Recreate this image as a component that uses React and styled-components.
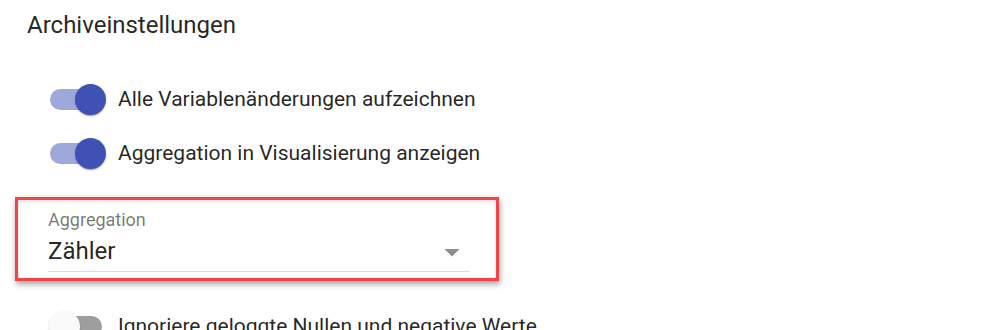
import React from 'react';
import styled, { createGlobalStyle } from 'styled-components';

const GlobalStyle = createGlobalStyle`
  html, body {
    margin: 0;
    padding: 0;
    background: #fff;
    font-family: Roboto, "Liberation Sans", sans-serif;
    color: rgba(0,0,0,.87);
    overflow: hidden;
  }
`;

const Page = styled.div`
  width: 989px;
  height: 330px;
  padding: 9px 0 0 27px;
  box-sizing: border-box;
`;

const Heading = styled.h2`
  margin: 0;
  font-size: 24px;
  line-height: 32px;
  font-weight: 400;
`;

const Options = styled.div`
  display: flex;
  flex-direction: column;
  margin-top: 31px;
  margin-left: 5px;
`;

const SwitchRow = styled.label`
  display: flex;
  align-items: center;
  height: 54px;
  font-size: 21px;
  line-height: 28px;
`;

const SwitchRoot = styled.span`
  position: relative;
  display: inline-flex;
  align-items: center;
  width: 86px;
  height: 54px;
  flex-shrink: 0;
`;

const Track = styled.span`
  position: absolute;
  left: 18px;
  top: 16.5px;
  width: 52px;
  height: 21px;
  border-radius: 10.5px;
  background: ${p => (p.checked ? '#9fa8da' : '#9e9e9e')};
`;

const Thumb = styled.span`
  position: absolute;
  top: 12px;
  left: ${p => (p.checked ? '42.5px' : '17px')};
  width: 31px;
  height: 31px;
  border-radius: 50%;
  background: ${p => (p.checked ? '#3f51b5' : '#fafafa')};
  box-shadow: 0 2px 1px -1px rgba(0,0,0,.2), 0 1px 1px 0 rgba(0,0,0,.14), 0 1px 3px 0 rgba(0,0,0,.12);
`;

const Highlight = styled.div`
  align-self: flex-start;
  margin: 17px 0 18px -17px;
  width: 484px;
  box-sizing: border-box;
  border: 3px solid #f44347;
  padding: 10px 26px 6px 30px;
  box-shadow: 1px 3px 6px rgba(0,0,0,.38), inset 0 2px 4px rgba(0,0,0,.12);
`;

const Field = styled.div`
  display: flex;
  flex-direction: column;
`;

const FieldLabel = styled.span`
  font-size: 18px;
  line-height: 20px;
  color: rgba(0,0,0,.54);
`;

const SelectLine = styled.div`
  display: flex;
  align-items: center;
  justify-content: space-between;
  margin-top: 5px;
  height: 32px;
  border-bottom: 1px solid #dedede;
  padding-bottom: 4px;
`;

const SelectValue = styled.span`
  font-size: 24px;
  line-height: 32px;
`;

const ArrowIcon = styled.svg`
  width: 36px;
  height: 36px;
  fill: #8e8e8e;
  margin-top: 2px;
`;

const Switch = ({ checked }) => (
  <SwitchRoot>
    <Track checked={checked} />
    <Thumb checked={checked} />
  </SwitchRoot>
);

const App = () => (
  <Page>
    <GlobalStyle />
    <Heading>Archiveinstellungen</Heading>
    <Options>
      <SwitchRow>
        <Switch checked />
        Alle Variablenänderungen aufzeichnen
      </SwitchRow>
      <SwitchRow>
        <Switch checked />
        Aggregation in Visualisierung anzeigen
      </SwitchRow>
      <Highlight>
        <Field>
          <FieldLabel>Aggregation</FieldLabel>
          <SelectLine>
            <SelectValue>Zähler</SelectValue>
            <ArrowIcon viewBox="0 0 24 24">
              <path d="M7 10l5 5 5-5z" />
            </ArrowIcon>
          </SelectLine>
        </Field>
      </Highlight>
      <SwitchRow>
        <Switch />
        Ignoriere geloggte Nullen und negative Werte
      </SwitchRow>
    </Options>
  </Page>
);

export default App;
